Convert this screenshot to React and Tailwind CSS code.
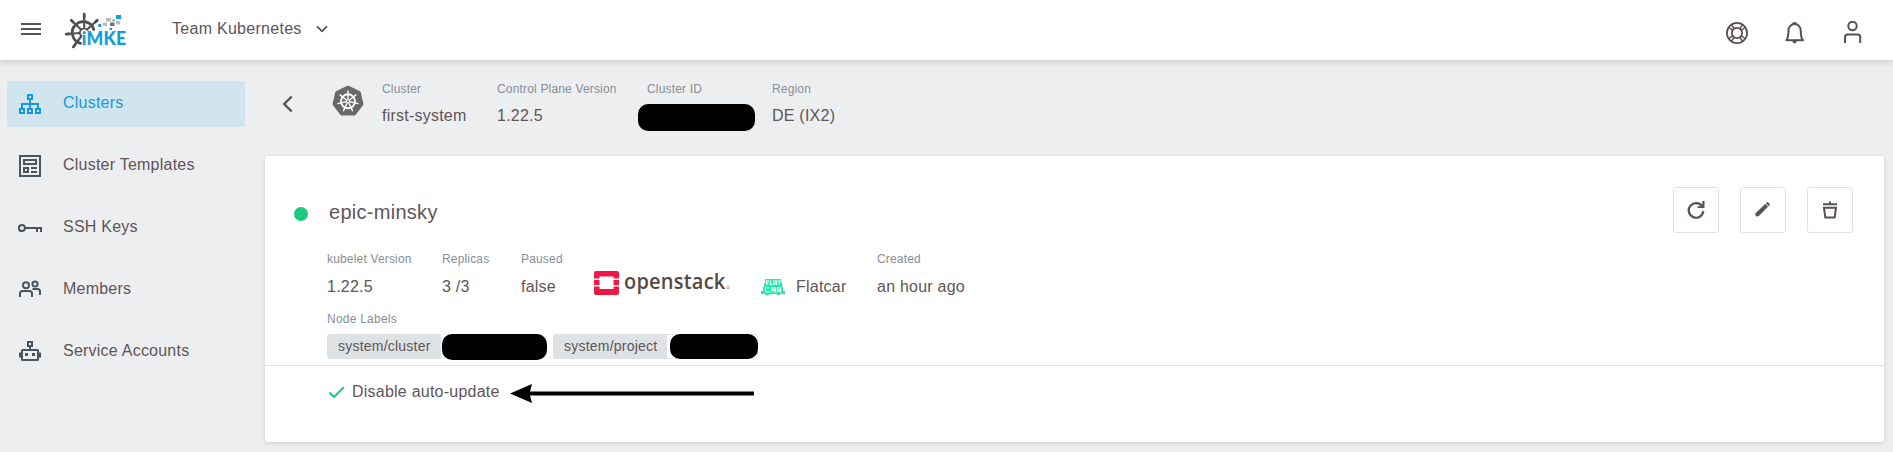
import React from 'react';

function WheelLogo() {
  return (
    <svg width="64" height="40" viewBox="0 0 64 40" className="block">
      <g stroke="#505050" strokeLinecap="round" fill="none">
        <path d="M16.500 33.300A11 11 0 1 1 29.800 19.500" strokeWidth="2.800" />
        <path d="M16.500 25A4.200 4.200 0 1 1 23.700 20.500" strokeWidth="1.800" />
        <path d="M20.200 5V17M8.500 11.500L17 19.500M32.500 11L23.500 19M3 24L15.500 23M17.500 26L10 36" strokeWidth="2.200" />
        <path d="M20.200 4.200V7M7.300 10.300L9 12M33.300 10.300L31.500 12M2.200 24.200L5 24M9.300 37L11 34.800" strokeWidth="2.800" />
      </g>
      <text x="17.800" y="35" fontFamily="Lato, sans-serif" fontWeight="900" fontSize="19" fill="#0f9be3" stroke="#fff" strokeWidth="1.200" paintOrder="stroke" textLength="44.500" lengthAdjust="spacingAndGlyphs">iMKE</text>
      <path d="M34.300 14h3v3h-3zM52 5h5v4h-5zM45.500 18h2.500v2h-2.500zM48.500 9.500h2v2h-2z" fill="#14a0e6" />
      <path d="M39 12.500h4v3.500h-4zM42 8h5v3.500h-5zM52 11h4v3.500h-4z" fill="#b9bcbe" />
      <path d="M46 12.500h4.500v3.500h-4.500z" fill="#70757a" />
    </svg>
  );
}

function ClustersIcon() {
  return (
    <svg width="24" height="24" viewBox="0 0 24 24" fill="none" stroke="#1499e0" strokeWidth="2">
      <path d="M10 3h4v4h-4zM2 17h4v4H2zM10 17h4v4h-4zM18 17h4v4h-4zM12 7v10M4 17v-5h16v5" />
    </svg>
  );
}
function TemplatesIcon() {
  return (
    <svg width="24" height="24" viewBox="0 0 24 24" fill="none" stroke="#4a5560" strokeWidth="2">
      <path d="M2 2h20v20H2zM6 6h12v4H6zM6 14h4v4H6zM13 14h6M13 18h6" />
    </svg>
  );
}
function KeyIcon() {
  return (
    <svg width="24" height="24" viewBox="0 0 24 24" fill="none" stroke="#4a5560" strokeWidth="2">
      <circle cx="3.900" cy="12" r="3" />
      <path d="M7 12h16v4M19 12v4" />
    </svg>
  );
}
function MembersIcon() {
  return (
    <svg width="24" height="24" viewBox="0 0 24 24" fill="none" stroke="#4a5560" strokeWidth="2">
      <circle cx="8" cy="7.300" r="3" />
      <circle cx="17" cy="6" r="2.600" />
      <path d="M2 19v-3.500a2.500 2.500 0 0 1 2.500-2.500h7a2.500 2.500 0 0 1 2.500 2.500V19M14.500 11h5a2.500 2.500 0 0 1 2.500 2.500V17" />
    </svg>
  );
}
function RobotIcon() {
  return (
    <svg width="24" height="24" viewBox="0 0 24 24" fill="none" stroke="#4a5560" strokeWidth="2">
      <path d="M10 2h4v4h-4zM12 6v4" />
      <rect x="4" y="10" width="16" height="10" rx="0.500" />
      <path d="M2 12.500v5M22 12.500v5" />
      <path d="M7 13h3v3H7zM14 13h3v3h-3z" fill="#4a5560" stroke="none" />
    </svg>
  );
}

const nav = [
  { label: 'Clusters', Icon: ClustersIcon, active: true },
  { label: 'Cluster Templates', Icon: TemplatesIcon },
  { label: 'SSH Keys', Icon: KeyIcon },
  { label: 'Members', Icon: MembersIcon },
  { label: 'Service Accounts', Icon: RobotIcon },
];

function Header() {
  return (
    <header className="relative z-10 flex h-[60px] shrink-0 items-start bg-white shadow-[0_1px_6px_1px_rgba(60,64,67,0.2)]">
      <svg className="ml-[21px] mt-[22px]" width="20" height="14" viewBox="0 0 20 14" stroke="#5a5053" strokeWidth="2">
        <path d="M0 2h20M0 7h20M0 12h20" />
      </svg>
      <div className="ml-[23px] mt-[10px]"><WheelLogo /></div>
      <div className="ml-[44px] mt-[17px] leading-6 tracking-[0.28px]">Team Kubernetes</div>
      <svg className="ml-[14px] mt-[25px]" width="12" height="8" viewBox="0 0 12 8" fill="none" stroke="#5a5053" strokeWidth="1.700">
        <path d="M1 1.300L6 6.300L11 1.300" />
      </svg>
      <div className="ml-auto mr-[28px] mt-[21px] flex gap-[34px]">
        <svg width="24" height="24" viewBox="0 0 24 24" fill="none" stroke="#5a5053" strokeWidth="1.800">
          <circle cx="12" cy="12" r="10.100" />
          <circle cx="12" cy="12" r="5.200" />
          <path d="M3.900 6.500L8 9.400M6.500 3.900L9.400 8M20.100 6.500L16 9.400M17.500 3.900L14.600 8M3.900 17.500L8 14.600M6.500 20.100L9.400 16M20.100 17.500L16 14.600M17.500 20.100L14.600 16" strokeWidth="1.500" />
        </svg>
        <svg width="24" height="24" viewBox="0 0 24 24" fill="none" stroke="#5a5053" strokeWidth="2">
          <path d="M3.600 19.200C5.200 16.500 5.400 14 5.500 9.500a6.100 6.600 0 0 1 12.200 0C17.800 14 18 16.500 19.600 19.200" />
          <path d="M2.600 19.200h18.200" />
          <path d="M9.600 1.200h4v2h-4zM9.300 20h4.600l-1.200 2.200h-2.200z" fill="#5a5053" stroke="none" />
        </svg>
        <svg width="24" height="24" viewBox="0 0 24 24" fill="none" stroke="#5a5053" strokeWidth="2">
          <circle cx="11.500" cy="5" r="4.200" />
          <path d="M4 22v-6a2.500 2.500 0 0 1 2.500-2.500h10.200a2.500 2.500 0 0 1 2.500 2.500v6" />
        </svg>
      </div>
    </header>
  );
}

function Sidebar() {
  return (
    <nav className="flex w-[265px] shrink-0 flex-col gap-4 pl-[7px] pr-[20px] pt-[21px]">
      {nav.map(({ label, Icon, active }) => (
        <div key={label} className={active ? 'flex h-[46px] items-center rounded-[3px] bg-[#d0e5ee] pl-[11px] text-[#1499e0]' : 'flex h-[46px] items-center pl-[11px]'}>
          <Icon />
          <span className="mb-[3px] ml-[21px] leading-6">{label}</span>
        </div>
      ))}
    </nav>
  );
}

function Prop({ label, children, className = '' }) {
  return (
    <div className={className}>
      <div className="text-xs leading-4 tracking-[0.17px] text-[#868e98]">{label}</div>
      <div className="mt-[8px] h-6 leading-6">{children}</div>
    </div>
  );
}

function HeadProp({ label, children, className = '' }) {
  return (
    <div className={className}>
      <div className="mt-px text-xs leading-4 tracking-[0.17px] text-[#868e98]">{label}</div>
      <div className="mt-[7px] h-6 leading-6">{children}</div>
    </div>
  );
}

function KubeIcon() {
  return (
    <svg width="32" height="32" viewBox="0 0 32 32" fill="none">
      <path d="M16 2L27.500 7.500L30.200 19.300L22.500 29.300H9.500L1.800 19.300L4.500 7.500Z" fill="#67696a" stroke="#67696a" strokeWidth="2.500" strokeLinejoin="round" />
      <g stroke="#fff">
        <circle cx="16" cy="16.300" r="7" strokeWidth="1.900" />
        <g strokeWidth="1.400" strokeLinecap="round">
          <path d="M16 16.300V6" />
          <path d="M16 16.300V6" transform="rotate(51.4 16 16.300)" />
          <path d="M16 16.300V6" transform="rotate(102.900 16 16.300)" />
          <path d="M16 16.300V6" transform="rotate(154.300 16 16.300)" />
          <path d="M16 16.300V6" transform="rotate(205.700 16 16.300)" />
          <path d="M16 16.300V6" transform="rotate(257.100 16 16.300)" />
          <path d="M16 16.300V6" transform="rotate(308.600 16 16.300)" />
        </g>
      </g>
      <circle cx="16" cy="16.300" r="1" fill="#67696a" />
    </svg>
  );
}

function OpenStack() {
  return (
    <svg className="overflow-visible" width="138" height="30" viewBox="0 0 138 30">
      <path d="M2 0H23a2 2 0 0 1 2 2V7.500H19.500V5.500H5.500V7.500H0V2a2 2 0 0 1 2-2ZM0 9h5.500v5H0zM19.500 9H25v5h-5.500zM0 15.500h5.500v2.500h14v-2.500H25V22a2 2 0 0 1-2 2H2a2 2 0 0 1-2-2Z" fill="#ed1844" />
      <text x="30" y="18" fontFamily="'Open Sans', sans-serif" fontWeight="600" fontSize="22" fill="#554a43" textLength="101.500" lengthAdjust="spacingAndGlyphs">openstack</text>
      <circle cx="134" cy="16.500" r="1.200" fill="none" stroke="#8d8580" strokeWidth="0.700" />
    </svg>
  );
}

function FlatcarIcon() {
  return (
    <svg width="24" height="16" viewBox="0 0 24 16" fill="#19f0a6">
      <path d="M4 0h16v4h1v4h1v4h2v3h-5v1H16v-1H8v1H4v-1H0v-3h2V8h1V4h1Z" />
      <g fill="none" stroke="#fff">
        <path d="M5.500 6V2h2.500M5.500 4h2M9.300 1.400v4h2M12.800 6V2h2.600v4M12.800 4.200h2.600M16.700 2h3M18.200 2v4" strokeWidth="1.100" />
        <path d="M8.800 8.600H4.500v4.200h4M10.800 13.600V8.600h3.400v5M10.800 11.200h3.400M16.500 13.600V8.600h3v2.400h-3M18.500 11l1.500 2.600" strokeWidth="1.300" />
      </g>
    </svg>
  );
}

function IconButton({ children }) {
  return <button className="flex size-[46px] items-center justify-center rounded-[3px] border border-[#dfe2e5] bg-white">{children}</button>;
}

function Card() {
  return (
    <section className="h-[286px] rounded-[3px] bg-white shadow-[0_1px_4px_rgba(60,64,67,0.18)]">
      <div className="flex h-[77px] items-start pt-[31px] pl-[29px] pr-[31px]">
        <span className="mt-[20px] size-[14px] rounded-full bg-[#1ec97e]" />
        <h2 className="ml-[21px] mt-[11px] text-xl leading-7 tracking-[0.28px]">epic-minsky</h2>
        <div className="ml-auto flex gap-[21px]">
          <IconButton>
            <svg className="mb-px mr-px" width="18" height="18" viewBox="0 0 18 18" fill="none" stroke="#5a5053" strokeWidth="2.200">
              <path d="M15.200 5.500A7.300 7.300 0 1 0 16.300 10.200" />
              <path d="M17.500 0v7h-7V5.200h4.800V0Z" fill="#5a5053" stroke="none" />
            </svg>
          </IconButton>
          <IconButton>
            <svg className="mb-[2px]" width="16" height="16" viewBox="0 0 16 16" fill="#5a5053" stroke="#5a5053" strokeWidth="0.500" strokeLinejoin="round">
              <path d="M.8 15.100V12.200L10.500 3.100L12.900 5.600L3.500 15.100ZM11.300 2.300L12.500 1.100L15 3.500L13.700 4.800L12.700 3.700Z" />
            </svg>
          </IconButton>
          <IconButton>
            <svg className="mb-px" width="18" height="18" viewBox="0 0 18 18" fill="none" stroke="#5a5053" strokeWidth="2">
              <path d="M2 3.300h14M9 .5v3M3 6.700h12l-1.300 9.700H4.300Z" />
            </svg>
          </IconButton>
        </div>
      </div>
      <div className="flex h-[60px] items-start pl-[62px] pt-[17px]">
        <Prop label="kubelet Version" className="w-[115px] pt-[1px]">1.22.5</Prop>
        <Prop label="Replicas" className="w-[79px] pt-[1px]">3 /3</Prop>
        <Prop label="Paused" className="w-[73px] pt-[1px]">false</Prop>
        <div className="mt-[21px] w-[167px]"><OpenStack /></div>
        <div className="mt-[25px] flex w-[116px] items-center">
          <FlatcarIcon />
          <span className="ml-[11px] leading-6">Flatcar</span>
        </div>
        <Prop label="Created" className="pt-[1px]">an hour ago</Prop>
      </div>
      <div className="h-[73px] border-b border-[#dfe2e5] pl-[62px] pt-[18px] text-sm">
        <div className="text-xs leading-4 text-[#868e98]">Node Labels</div>
        <div className="mt-[7px] flex gap-[6px]">
          <div className="flex h-[25px] w-[220px] rounded-[3px] bg-[#dee2e5]">
            <span className="w-[114px] pl-[11px] leading-6 tracking-[0.22px]">system/cluster</span>
            <span className="h-[25px] w-[106px] bg-white">
              <span className="ml-px block h-[26px] w-[105px] rounded-[10px] bg-black" />
            </span>
          </div>
          <div className="flex h-[25px] w-[205px] rounded-[3px] border border-[#dee2e5]">
            <span className="-my-px -ml-px w-[114px] rounded-l-[3px] bg-[#dee2e5] pl-[11px] leading-6">system/project</span>
            <span className="-my-px -mr-px ml-[3px] block h-[25px] w-[88px] rounded-[10px] bg-black" />
          </div>
        </div>
      </div>
      <div className="flex items-start pl-[63px] pt-[9px]">
        <svg className="mt-[10px]" width="17" height="14" viewBox="0 0 17 14" fill="none" stroke="#1ec97e" strokeWidth="2">
          <path d="M1.500 7.500L6 12L15.700 2.300" />
        </svg>
        <span className="ml-[7px] mt-[5px] leading-6">Disable auto-update</span>
        <svg className="ml-[10px] mt-[8px]" width="244" height="20" viewBox="0 0 244 20">
          <path d="M0 10.500L22 1L20 8.500H244V12.500H20L22 20Z" fill="#000" />
        </svg>
      </div>
    </section>
  );
}

export default function App() {
  return (
    <div className="flex h-[452px] w-full flex-col overflow-hidden bg-[#edeef0] font-['Liberation_Sans',Arial,sans-serif] text-base tracking-[0.23px] text-[#5e5558]">
      <Header />
      <div className="flex flex-1">
        <Sidebar />
        <main className="flex-1 pr-[9px]">
          <div className="flex h-[96px] items-start pt-[20px]">
            <svg className="ml-[17px] mt-[15px]" width="12" height="18" viewBox="0 0 12 18" fill="none" stroke="#5a5053" strokeWidth="2.300">
              <path d="M9.700 1.500L2.200 9L9.700 16.500" />
            </svg>
            <div className="ml-[38px] mt-[5px]"><KubeIcon /></div>
            <HeadProp label="Cluster" className="ml-[18px] w-[115px]">first-system</HeadProp>
            <HeadProp label="Control Plane Version" className="w-[150px]">1.22.5</HeadProp>
            <HeadProp label="Cluster ID" className="w-[125px]">
              <span className="-ml-[9px] block h-[27px] w-[117px] rounded-[10px] bg-black" />
            </HeadProp>
            <HeadProp label="Region">DE (IX2)</HeadProp>
          </div>
          <Card />
        </main>
      </div>
    </div>
  );
}
